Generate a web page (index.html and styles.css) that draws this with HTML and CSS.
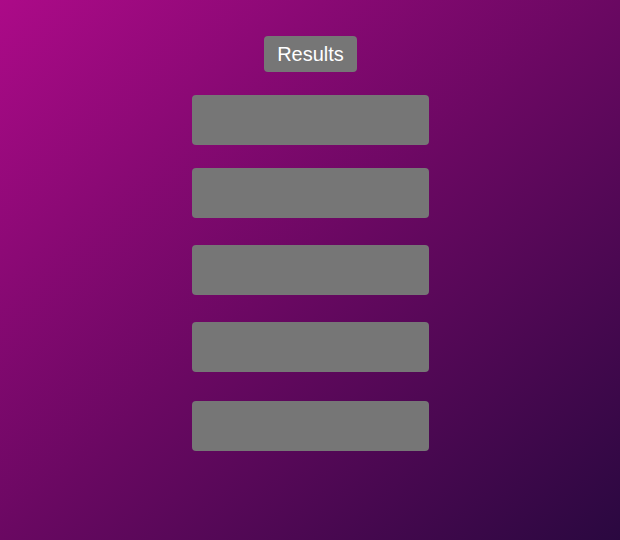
FILE: index.html
```html
<!DOCTYPE html>
<html>
<head>
<meta charset="utf-8">
<link rel="stylesheet" href="styles.css">
</head>
<body>
<main class="page">
  <button class="results-btn">Results</button>
  <ul class="result-list">
    <li class="result r1"></li>
    <li class="result r2"></li>
    <li class="result r3"></li>
    <li class="result r4"></li>
    <li class="result r5"></li>
  </ul>
</main>
</body>
</html>
```
FILE: styles.css
```css
html, body {
  margin: 0;
  padding: 0;
  height: 100%;
}
body {
  background: linear-gradient(to bottom right, #ac0a88 0%, #6a0862 50%, #2a0840 100%);
  font-family: "Liberation Sans", Arial, sans-serif;
}
.page {
  display: flex;
  flex-direction: column;
  align-items: center;
  padding-top: 36px;
}
.results-btn {
  background: #767676;
  color: #fff;
  border: none;
  border-radius: 4px;
  font-family: "Liberation Sans", Arial, sans-serif;
  font-size: 20px;
  line-height: 24px;
  height: 36px;
  width: 93px;
  padding: 0;
  margin-left: 1px;
}
.result-list {
  list-style: none;
  margin: 23px 0 0 0;
  padding: 0;
  display: flex;
  flex-direction: column;
}
.result {
  width: 237px;
  height: 50px;
  background: #767676;
  border-radius: 4px;
  margin-left: 1px;
}
.r2 { margin-top: 23px; }
.r3 { margin-top: 27px; }
.r4 { margin-top: 27px; }
.r5 { margin-top: 29px; }
```
